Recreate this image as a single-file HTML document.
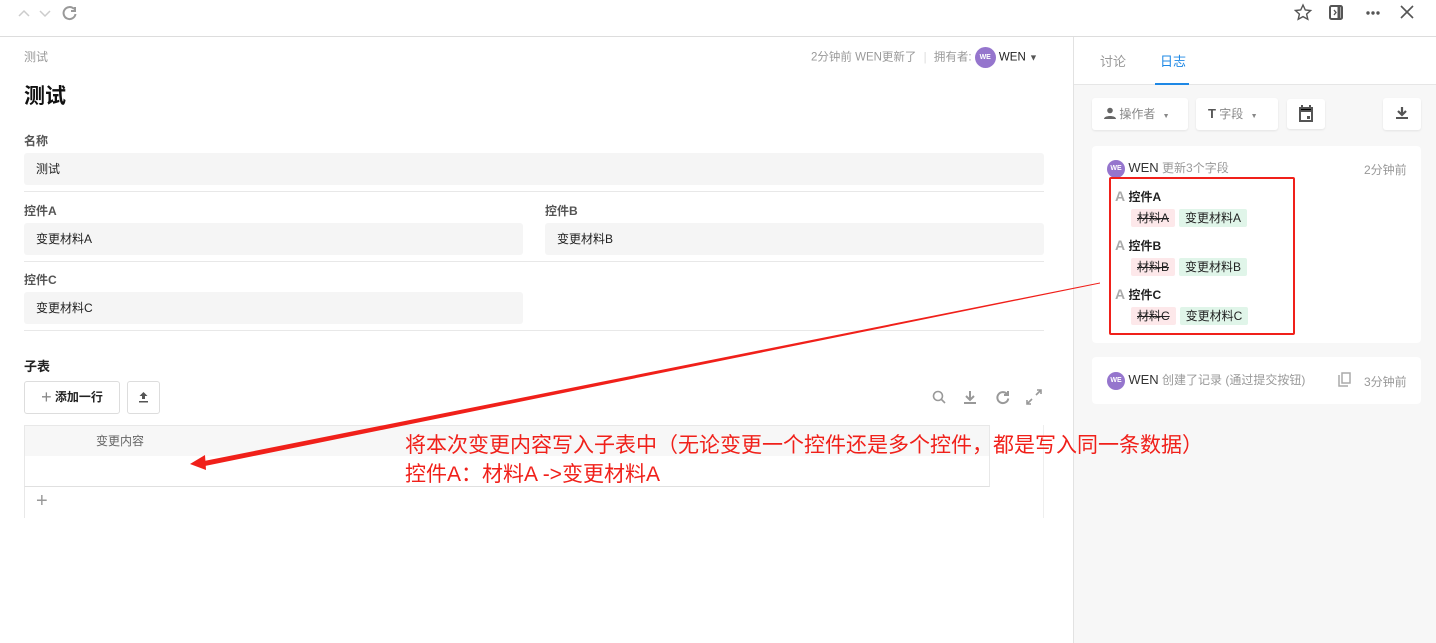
<!DOCTYPE html><html><head><meta charset="utf-8"><style>
*{box-sizing:border-box;margin:0;padding:0}
body{width:1436px;height:643px;overflow:hidden;background:#fff;font-family:"Liberation Sans","Noto Sans CJK SC",sans-serif;font-size:12px;color:#222;position:relative}
.a{position:absolute}
.lbl{position:absolute;font-size:12px;color:#555;font-weight:bold}
.fld{position:absolute;background:#f5f5f5;border-radius:3px;height:32px;line-height:32px;padding-left:12px;font-size:12px;color:#222}
.hr{position:absolute;height:1px;background:#e8e8e8}
.tag{display:inline-block;height:18px;line-height:18px;padding:0 6px;border-radius:2px;font-size:12px;margin-right:4px}
.del{background:#fde8ea;text-decoration:line-through}
.add{background:#e0f5e9}
.av{display:inline-block;width:18px;height:18px;border-radius:50%;background:#9575cd;color:#fff;font-size:7px;line-height:18px;text-align:center;font-weight:bold;vertical-align:middle}
.btn{position:absolute;background:#fff;border-radius:3px;box-shadow:0 1px 2px rgba(0,0,0,.08);height:32px;line-height:32px;color:#888;font-size:12px}
</style></head><body>
<div class="a" style="left:0;top:36px;width:1436px;height:1px;background:#ddd"></div>
<svg class="a" style="left:16px;top:4px" width="64" height="18" fill="none" stroke="#ccc" stroke-width="1.5"><path d="M3 12l5-5 5 5"/><path d="M24 7l5 5 5-5"/><path stroke="#999" stroke-width="2" d="M58 5a6 6 0 1 0 1.5 5M59 3v4h-4"/></svg>
<svg class="a" style="left:1294px;top:3px" width="130" height="20" fill="none" stroke="#555" stroke-width="1.4"><path d="M9 2l2.3 5 5.3.5-4 3.6 1.2 5.2L9 13.6 4.2 16.3l1.2-5.2-4-3.6 5.3-.5z"/><rect x="36" y="3" width="12" height="13" rx="1.5" stroke-width="2"/><path d="M45 3v13" stroke-width="3"/><path d="M40 7l2 2.5-2 2.5"/><circle cx="74" cy="10" r="1" fill="#555"/><circle cx="79" cy="10" r="1" fill="#555"/><circle cx="84" cy="10" r="1" fill="#555"/><path d="M107 3l12 12M119 3l-12 12" stroke-width="1.6"/></svg>
<div class="a" style="left:24px;top:48px;color:#999;font-size:12px">测试</div>
<div class="a" style="left:24px;top:80px;font-size:21px;font-weight:bold;color:#111">测试</div>
<div class="a" style="left:811px;top:47px;color:#999;font-size:11.5px">2分钟前 WEN更新了 <span style="color:#ddd;margin:0 4px">|</span> 拥有者: <span class="av" style="width:21px;height:21px;line-height:21px">WE</span> <span style="color:#222">WEN</span> <span style="color:#555;font-size:9px">▼</span></div>
<div class="lbl" style="left:24px;top:132px">名称</div>
<div class="fld" style="left:24px;top:153px;width:1020px">测试</div>
<div class="hr" style="left:24px;top:191px;width:1020px"></div>
<div class="lbl" style="left:24px;top:202px">控件A</div>
<div class="lbl" style="left:545px;top:202px">控件B</div>
<div class="fld" style="left:24px;top:223px;width:499px">变更材料A</div>
<div class="fld" style="left:545px;top:223px;width:499px">变更材料B</div>
<div class="hr" style="left:24px;top:261px;width:1020px"></div>
<div class="lbl" style="left:24px;top:271px">控件C</div>
<div class="fld" style="left:24px;top:292px;width:499px">变更材料C</div>
<div class="hr" style="left:24px;top:330px;width:1020px"></div>
<div class="a" style="left:24px;top:356px;font-weight:bold;font-size:13px;color:#222">子表</div>
<div class="a" style="left:24px;top:381px;width:96px;height:33px;border:1px solid #ddd;border-radius:3px;line-height:31px;text-align:center;font-weight:bold;font-size:12px"><span style="color:#888;font-size:18px;font-weight:normal;vertical-align:-2px">+</span> 添加一行</div>
<div class="a" style="left:127px;top:381px;width:33px;height:33px;border:1px solid #ddd;border-radius:3px"><svg width="31" height="31"><path d="M15.5 10l-4 4h2.5v3h3v-3h2.5zM11 19h9v1.5h-9z" fill="#555"/></svg></div>
<svg class="a" style="left:930px;top:389px" width="112" height="18" fill="none" stroke="#999" stroke-width="1.6"><circle cx="8" cy="7" r="4.5"/><path d="M11 10l4 4"/><path d="M40 2v8M36 7l4 4 4-4" stroke-width="2"/><path d="M34 14h12" stroke-width="2"/><path d="M77 5a5.5 5.5 0 1 0 1.3 4.5M78 2v4h-4" stroke-width="2"/><path d="M97 15l5-5M106 6l5-5M97 11v4h4M107 1h4v4"/></svg>
<div class="a" style="left:24px;top:425px;width:966px;height:62px;border:1px solid #e8e8e8;border-bottom:1px solid #e0e0e0"></div>
<div class="a" style="left:25px;top:426px;width:964px;height:30px;background:#f7f7f7;color:#666;font-size:12px;line-height:30px;padding-left:71px">变更内容</div>
<div class="a" style="left:24px;top:487px;width:1px;height:31px;background:#e8e8e8"></div>
<div class="a" style="left:1043px;top:425px;width:1px;height:93px;background:#eee"></div>
<div class="a" style="left:36px;top:490px;color:#999;font-size:20px">+</div>
<div class="a" style="left:1073px;top:37px;width:363px;height:606px;background:#f7f7f7;border-left:1px solid #e2e2e2"></div>
<div class="a" style="left:1074px;top:37px;width:362px;height:48px;background:#fff;border-bottom:1px solid #e6e6e6"></div>
<div class="a" style="left:1100px;top:51px;color:#999;font-size:13px">讨论</div>
<div class="a" style="left:1160px;top:51px;color:#1e88e5;font-size:13px">日志</div>
<div class="a" style="left:1155px;top:83px;width:34px;height:2px;background:#1e88e5"></div>
<div class="btn" style="left:1092px;top:98px;width:96px;padding-left:12px"><svg width="12" height="12" style="vertical-align:-1px"><circle cx="6" cy="3.5" r="2.8" fill="#666"/><path d="M0 12c0-4 12-4 12 0z" fill="#666"/></svg> 操作者 <span style="font-size:7px;margin-left:4px">▼</span></div>
<div class="btn" style="left:1196px;top:98px;width:82px;padding-left:12px"><b style="color:#555;font-size:13px">T</b> 字段 <span style="font-size:7px;margin-left:4px">▼</span></div>
<div class="btn" style="left:1287px;top:99px;width:38px;height:30px"><svg width="38" height="30"><path d="M13 9h12v13H13z" fill="none" stroke="#555" stroke-width="2"/><path d="M13 9h12v3H13zM15 6v3M23 6v3" stroke="#555" stroke-width="2"/><rect x="20" y="17" width="3" height="3" fill="#555"/></svg></div>
<div class="btn" style="left:1383px;top:98px;width:38px"><svg width="38" height="32"><path d="M19 9v7M15 13l4 4 4-4" stroke="#555" stroke-width="2.2" fill="none"/><path d="M13 20h12" stroke="#555" stroke-width="2"/></svg></div>
<div class="a" style="left:1092px;top:146px;width:329px;height:197px;background:#fff;border-radius:4px"></div>
<div class="a" style="left:1107px;top:159px;font-size:12px"><span class="av">WE</span> <span style="color:#333;font-size:13px">WEN</span> <span style="color:#999">更新3个字段</span></div>
<div class="a" style="left:1364px;top:161px;color:#999;font-size:12px">2分钟前</div>
<div class="a" style="left:1109px;top:177px;width:186px;height:158px;border:2px solid #f0201a;border-radius:2px"></div>
<div class="a" style="left:1115px;top:189px;font-weight:bold;line-height:1"><span style="color:#aaa;font-size:14px">A</span> 控件A</div>
<div class="a" style="left:1131px;top:209px"><span class="tag del">材料A</span><span class="tag add">变更材料A</span></div>
<div class="a" style="left:1115px;top:238px;font-weight:bold;line-height:1"><span style="color:#aaa;font-size:14px">A</span> 控件B</div>
<div class="a" style="left:1131px;top:258px"><span class="tag del">材料B</span><span class="tag add">变更材料B</span></div>
<div class="a" style="left:1115px;top:287px;font-weight:bold;line-height:1"><span style="color:#aaa;font-size:14px">A</span> 控件C</div>
<div class="a" style="left:1131px;top:307px"><span class="tag del">材料C</span><span class="tag add">变更材料C</span></div>
<div class="a" style="left:1092px;top:357px;width:329px;height:47px;background:#fff;border-radius:4px"></div>
<div class="a" style="left:1107px;top:371px;font-size:12px"><span class="av">WE</span> <span style="color:#333;font-size:13px">WEN</span> <span style="color:#999">创建了记录 (通过提交按钮)</span></div>
<svg class="a" style="left:1338px;top:372px" width="14" height="16" fill="none" stroke="#aaa" stroke-width="1.5"><path d="M1 3v11h9"/><rect x="4" y="1" width="8" height="10"/></svg>
<div class="a" style="left:1364px;top:373px;color:#999;font-size:12px">3分钟前</div>
<svg class="a" style="left:0;top:0" width="1436" height="643"><polygon points="1100,282.5 1100,283.5 200,467 199,462" fill="#f0201a"/><polygon points="190,464 205,455 206,470" fill="#f0201a"/></svg>
<div class="a" style="left:405px;top:431px;color:#f0201a;font-size:21px;line-height:29px;white-space:nowrap">将本次变更内容写入子表中（无论变更一个控件还是多个控件，都是写入同一条数据）<br>控件A：材料A -&gt;变更材料A</div>
</body></html>
